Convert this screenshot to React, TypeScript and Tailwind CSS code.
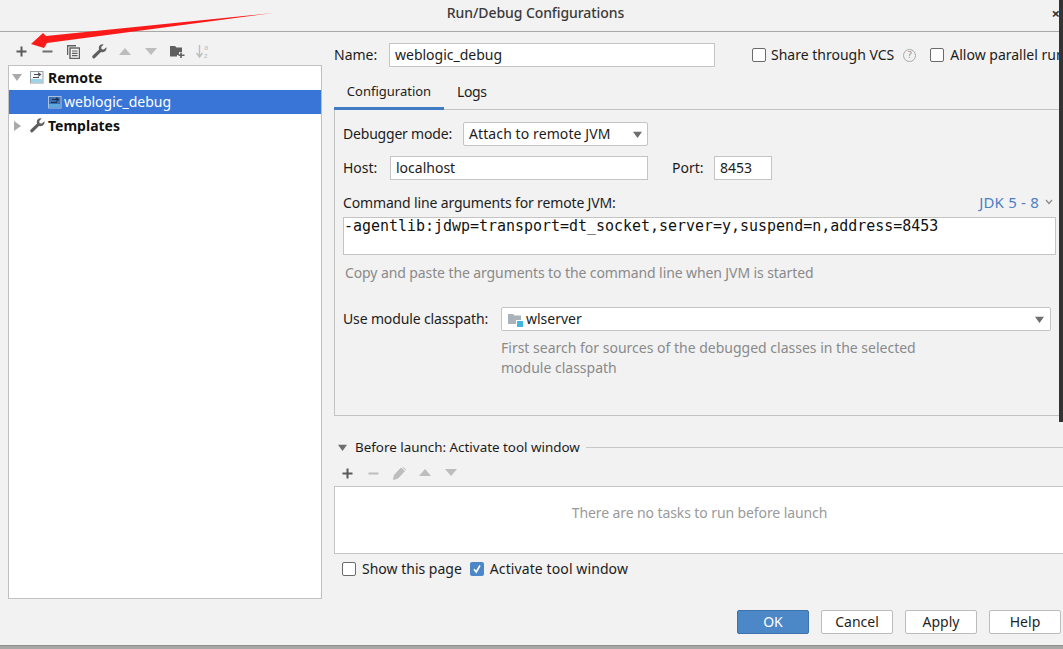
import React from "react";

const F = "font-['Noto_Sans',sans-serif]";

function Cb({ checked = false }: { checked?: boolean }) {
  return checked ? (
    <span className="flex h-[14px] w-[14px] shrink-0 items-center justify-center rounded-[2px] bg-[#4c87c8]">
      <svg width="10" height="10" viewBox="0 0 10 10"><path d="M2 5.2 L4.2 8 L8 1.5" fill="none" stroke="#fff" strokeWidth="1.6" /></svg>
    </span>
  ) : (
    <span className="block h-[14px] w-[14px] shrink-0 rounded-[2px] border border-[#6b6b6b] bg-white" />
  );
}

function Caret({ dir = "down", color = "#6e6e6e", size = 10 }: { dir?: string; color?: string; size?: number }) {
  return (
    <svg width={size} height={size} viewBox="0 0 10 10">
      {dir === "down" ? <path d="M0 2 H10 L5 9 Z" fill={color} /> : <path d="M2 0 V10 L9 5 Z" fill={color} />}
    </svg>
  );
}

function Slot({ children }: { children: React.ReactNode }) {
  return <span className="flex w-[26px] shrink-0 items-center justify-center">{children}</span>;
}

function Plus({ c = "#5a5a5a" }: { c?: string }) {
  return <svg width="11" height="11" viewBox="0 0 11 11"><path d="M5.5 0.5 V10.5 M0.5 5.5 H10.5" stroke={c} strokeWidth="2" /></svg>;
}
function Minus({ c = "#6e6e6e" }: { c?: string }) {
  return <svg width="11" height="11" viewBox="0 0 11 11"><path d="M0.5 5.5 H10.5" stroke={c} strokeWidth="2" /></svg>;
}
function Tri({ up, c = "#bdbdbd" }: { up?: boolean; c?: string }) {
  return <svg width="12" height="8" viewBox="0 0 12 8">{up ? <path d="M6 0 L12 7 H0 Z" fill={c} /> : <path d="M0 0 H12 L6 7 Z" fill={c} />}</svg>;
}
function Wrench({ size = 15 }: { size?: number }) {
  return (
    <svg width={size} height={size} viewBox="0 0 15 15">
      <path d="M14.5 3.2 L11.8 5.6 L9.6 5.2 L9.2 3 L11.6 0.5 C9.2 -0.2 6.8 1.4 6.8 4 C6.8 4.6 6.9 5.1 7.1 5.6 L0.8 11.4 C0 12.2 0 13.2 0.7 13.9 C1.4 14.6 2.4 14.6 3.2 13.8 L9 8 C9.5 8.2 10 8.3 10.6 8.3 C13.2 8.2 15 5.8 14.5 3.2 Z" fill="#5f5f5f" />
    </svg>
  );
}
function Copy() {
  return (
    <svg width="13" height="14" viewBox="0 0 13 14">
      <path d="M0.5 10 V0.75 H9" fill="none" stroke="#5f5f5f" strokeWidth="1.5" />
      <rect x="3" y="3" width="9.5" height="10.5" fill="none" stroke="#5f5f5f" strokeWidth="1.4" />
      <path d="M5 6 H10.5 M5 8.3 H10.5 M5 10.6 H10.5" stroke="#5f5f5f" strokeWidth="1.2" />
    </svg>
  );
}
function FolderPlus() {
  return (
    <svg width="15" height="13" viewBox="0 0 15 13">
      <path d="M0 1 H5 L6.5 2.5 H12 V7 H9 V10 H7 V11.5 H0 Z" fill="#5f5f5f" />
      <path d="M11 7.5 V13 M8.5 10.2 H14.5" stroke="#5f5f5f" strokeWidth="1.6" />
    </svg>
  );
}
function SortAz() {
  return (
    <svg width="15" height="15" viewBox="0 0 15 15">
      <path d="M3.5 1 V12 M0.5 9 L3.5 13 L6.5 9" fill="none" stroke="#bdbdbd" strokeWidth="1.4" />
      <text x="8" y="6" fontSize="7.5" fill="#bdbdbd" fontFamily="Noto Sans">a</text>
      <text x="8" y="14" fontSize="7.5" fill="#bdbdbd" fontFamily="Noto Sans">z</text>
    </svg>
  );
}
function RemoteIcon({ selected }: { selected?: boolean }) {
  const border = selected ? "#a9c1de" : "#9aa0a6";
  return (
    <svg width="14" height="14" viewBox="0 0 14 14">
      <rect x="0.5" y="1.5" width="12.5" height="11.5" fill={selected ? "#3a6fb5" : "#f4f6f8"} stroke={border} />
      <rect x="1" y="9" width="11.5" height="3.5" fill={selected ? "#5aa8dc" : "#9bd3ea"} />
      <path d="M4 4.5 H10 M8 2.7 L10.5 4.6 L8 6.4 M3 7.5 H9" fill="none" stroke={selected ? "#1c2f4a" : "#4a4f55"} strokeWidth="1.1" />
    </svg>
  );
}

function Btn({ label, primary }: { label: string; primary?: boolean }) {
  return (
    <div
      className={
        "flex h-[24px] w-[72px] items-center justify-center rounded-[2px] border pb-[2px] text-[14px] " +
        (primary ? "border-[#3d72ad] bg-[#4c87c8] text-white" : "border-[#bcbcbc] bg-white text-[#1f1f1f]")
      }
    >
      {label}
    </div>
  );
}

export default function App() {
  return (
    <div className={"relative flex h-[649px] w-[1063px] flex-col overflow-hidden bg-[#f2f2f2] text-[14px] text-[#1c1c1c] " + F}>
      {/* title bar */}
      <div className="relative flex h-[32px] shrink-0 items-center justify-center border-b border-[#a8a8a4] pb-[6px] pl-[8px] text-[#3a3a3a]">
        <span className="font-medium tracking-[-0.08px]">Run/Debug Configurations</span>
        <span className="absolute right-[3px] top-[2px] text-[15px] font-bold text-[#333]">×</span>
      </div>

      <div className="flex min-h-0 flex-1">
        {/* left */}
        <div className="ml-[8px] flex w-[314px] shrink-0 flex-col">
          <div className="flex h-[33px] shrink-0 items-center pb-[2px] pt-[8px]">
            <Slot><Plus /></Slot>
            <Slot><Minus /></Slot>
            <Slot><Copy /></Slot>
            <Slot><Wrench /></Slot>
            <Slot><Tri up /></Slot>
            <Slot><Tri /></Slot>
            <Slot><FolderPlus /></Slot>
            <Slot><SortAz /></Slot>
          </div>
          <div className="h-[534px] border border-[#c0c0c0] bg-white">
            <div className="flex h-[24px] items-center pb-[2px]">
              <span className="ml-[3px] mr-[8px] flex"><Caret color="#aaaaaa" /></span>
              <RemoteIcon />
              <span className="ml-[4px] font-bold text-[#111]">Remote</span>
            </div>
            <div className="flex h-[24px] items-center bg-[#3875d7] pl-[39px] pb-[1px] text-white">
              <RemoteIcon selected />
              <span className="ml-[2px]">weblogic_debug</span>
            </div>
            <div className="flex h-[24px] items-center pb-[1px]">
              <span className="ml-[3px] mr-[8px] flex"><Caret dir="right" color="#aaaaaa" /></span>
              <Wrench />
              <span className="ml-[3px] font-bold text-[#111]">Templates</span>
            </div>
          </div>
        </div>

        {/* right */}
        <div className="ml-[12px] flex min-w-0 flex-1 flex-col">
          <div className="mt-[11px] flex h-[24px] shrink-0 items-center">
            <span className="w-[43px] shrink-0 pb-[2px]">Name:</span>
            <div className="ml-[12px] flex h-[24px] w-[326px] shrink-0 items-center border border-[#c4c4c4] bg-white pb-[1px] pl-[5px]">weblogic_debug</div>
            <span className="ml-[37px] mr-[5px]"><Cb /></span>
            <span className="whitespace-nowrap pb-[2px]">Share through VCS</span>
            <span className="ml-[9px] flex h-[13px] w-[13px] shrink-0 items-center justify-center rounded-full border border-[#a9a9a9] text-[9px] text-[#8a8a8a]">?</span>
            <span className="ml-[14px] mr-[6px]"><Cb /></span>
            <span className="whitespace-nowrap pb-[2px]">Allow parallel run</span>
          </div>

          <div className="mt-[11px] flex h-[32px] shrink-0 border-b border-[#c4c4c4]">
            <div className="-mb-px flex w-[110px] items-center justify-center border-b-[3px] border-[#3f7cc4] pb-[1px] text-[13px]">Configuration</div>
            <div className="flex items-center pb-[4px] pl-[13px] tracking-[-0.4px]">Logs</div>
          </div>

          <div className="flex h-[306px] shrink-0 flex-col border-b border-l border-[#c4c4c4] pl-[8px]">
            <div className="mt-[12px] flex h-[24px] shrink-0 items-center">
              <span className="w-[109px] shrink-0 pb-[2px] tracking-[-0.2px]">Debugger mode:</span>
              <div className="ml-[11px] flex h-[24px] w-[185px] shrink-0 items-center justify-between rounded-[2px] border border-[#c4c4c4] bg-white pl-[5px] pr-[5px]">
                <span className="pb-[2px] tracking-[0.1px]">Attach to remote JVM</span>
                <Caret size={9} />
              </div>
            </div>
            <div className="mt-[10px] flex h-[24px] shrink-0 items-center">
              <span className="w-[36px] shrink-0 pb-[2px]">Host:</span>
              <div className="ml-[11px] flex h-[24px] w-[258px] shrink-0 items-center border border-[#c4c4c4] bg-white pb-[2px] pl-[5px]">localhost</div>
              <span className="ml-[24px] w-[31px] shrink-0 pb-[2px]">Port:</span>
              <div className="ml-[11px] flex h-[24px] w-[58px] shrink-0 items-center border border-[#c4c4c4] bg-white pb-[2px] pl-[5px]">8453</div>
            </div>
            <div className="mt-[12px] flex h-[22px] shrink-0 items-center justify-between pb-[2px] pr-[10px]">
              <span className="tracking-[-0.15px]">Command line arguments for remote JVM:</span>
              <span className="flex items-center gap-[6px] text-[15px] tracking-[0.2px] text-[#4d7fc4]">
                JDK 5 - 8
                <svg width="8" height="6" viewBox="0 0 8 6"><path d="M1 1 L4 4.5 L7 1" fill="none" stroke="#8a8a8a" strokeWidth="1.2" /></svg>
              </span>
            </div>
            <div className="mr-[7px] mt-[3px] h-[38px] shrink-0 whitespace-nowrap border border-[#c4c4c4] bg-white font-['DejaVu_Sans_Mono',monospace] text-[14.96px] leading-[17px] text-[#111]">
              -agentlib:jdwp=transport=dt_socket,server=y,suspend=n,address=8453
            </div>
            <div className="mt-[8px] h-[20px] shrink-0 whitespace-nowrap pl-[2px] leading-[20px] tracking-[-0.1px] text-[#8a8a8a]">Copy and paste the arguments to the command line when JVM is started</div>
            <div className="mt-[24px] flex h-[24px] shrink-0 items-center">
              <span className="w-[145px] shrink-0 whitespace-nowrap pb-[2px] tracking-[-0.14px]">Use module classpath:</span>
              <div className="ml-[13px] flex h-[24px] w-[550px] shrink-0 items-center justify-between rounded-[2px] border border-[#c4c4c4] bg-white pl-[6px] pr-[6px]">
                <span className="flex items-center gap-[3px]">
                  <svg width="15" height="15" viewBox="0 0 15 15">
                    <path d="M0 2 H5 L6.5 3.5 H13 V12 H0 Z" fill="#aab2ba" />
                    <rect x="8" y="8" width="7" height="7" fill="#fff" />
                    <rect x="9" y="9" width="6" height="6" fill="#40b6e0" />
                  </svg>
                  <span className="pb-[2px]">wlserver</span>
                </span>
                <Caret size={9} />
              </div>
            </div>
            <div className="ml-[158px] mt-[7px] w-[440px] leading-[20px] text-[#8a8a8a]">
              First search for sources of the debugged classes in the selected module classpath
            </div>
          </div>

          <div className="mt-[21px] flex h-[20px] shrink-0 items-center">
            <span className="ml-[4px] mr-[8px] flex"><Caret size={9} /></span>
            <span className="whitespace-nowrap text-[13.4px]">Before launch: Activate tool window</span>
            <div className="ml-[6px] h-px flex-1 bg-[#c8c8c8]" />
          </div>
          <div className="flex h-[29px] shrink-0 items-center pt-[3px]">
            <Slot><Plus /></Slot>
            <Slot><Minus c="#bdbdbd" /></Slot>
            <Slot><svg width="13" height="13" viewBox="0 0 13 13"><path d="M0.5 12.5 L1.5 8 L8 1 L11.5 4 L5 11 Z M9.5 0 L13 3" fill="#bdbdbd" stroke="#bdbdbd" /></svg></Slot>
            <Slot><Tri up /></Slot>
            <Slot><Tri /></Slot>
          </div>
          <div className="flex h-[68px] shrink-0 items-center justify-center border-y border-l border-[#c4c4c4] bg-white pb-[16px] pl-[1px] tracking-[-0.1px] text-[#9a9a9a]">
            There are no tasks to run before launch
          </div>
          <div className="mt-[4px] flex h-[22px] shrink-0 items-center pl-[8px]">
            <Cb />
            <span className="ml-[6px] pb-[2px]">Show this page</span>
            <span className="ml-[8px]"><Cb checked /></span>
            <span className="ml-[6px] pb-[2px] tracking-[0.1px]">Activate tool window</span>
          </div>
          <div className="mt-[30px] flex shrink-0 justify-end gap-[12px] pr-[2px]">
            <Btn label="OK" primary />
            <Btn label="Cancel" />
            <Btn label="Apply" />
            <Btn label="Help" />
          </div>
        </div>
      </div>

      {/* desktop behind the dialog: bottom and right edges */}
      <div className="absolute bottom-0 left-0 h-[4px] w-full border-t border-[#8f8f8c] bg-[#a8a8a6]" />
      <div className="absolute right-0 top-0 h-[422px] w-[4px] bg-[#333333]" />
      {/* annotation arrow */}
      <svg className="absolute left-0 top-0" width="280" height="55" viewBox="0 0 280 55">
        <path d="M273 13 L46 36 L43 33 L31 44 L44 48 L47 43 Z" fill="#fb1a1a" />
      </svg>
    </div>
  );
}
